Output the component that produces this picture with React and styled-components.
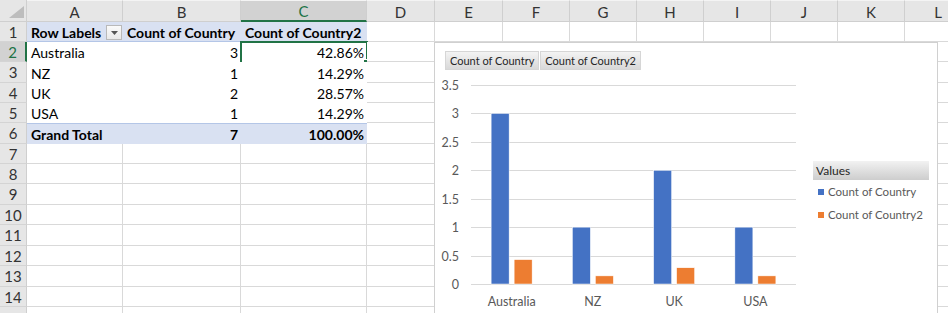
import React from 'react'
import styled, { createGlobalStyle } from 'styled-components'

const GlobalStyle = createGlobalStyle`
  html, body {
    margin: 0;
    padding: 0;
    background: #ffffff;
    overflow: hidden;
  }
`

const FONT = `Lato, "Liberation Sans", Arial, sans-serif`
const GREEN = '#217346'
const PIVOT_FILL = '#D9E1F2'
const PIVOT_LINE = '#B4C6E7'
const GRID = '#d9d9d9'

const COLS = ['A', 'B', 'C', 'D', 'E', 'F', 'G', 'H', 'I', 'J', 'K', 'L']
// row 15 only peeks in at the bottom edge, so it gets no label
const ROW_HEIGHTS = [20, 20, 21, 20, 20, 21, 20, 20, 21, 20, 21, 20, 21, 20, 20]

const pivot = {
  1: [{ text: 'Row Labels', bold: true, dropdown: true }, { text: 'Count of Country', bold: true }, { text: 'Count of Country2', bold: true }],
  2: [{ text: 'Australia' }, { text: '3', right: true }, { text: '42.86%', right: true, selected: true }],
  3: [{ text: 'NZ' }, { text: '1', right: true }, { text: '14.29%', right: true }],
  4: [{ text: 'UK' }, { text: '2', right: true }, { text: '28.57%', right: true }],
  5: [{ text: 'USA' }, { text: '1', right: true }, { text: '14.29%', right: true }],
  6: [{ text: 'Grand Total', bold: true }, { text: '7', bold: true, right: true }, { text: '100.00%', bold: true, right: true }],
}

const chartData = [
  { label: 'Australia', a: 3, b: 0.4286 },
  { label: 'NZ', a: 1, b: 0.1429 },
  { label: 'UK', a: 2, b: 0.2857 },
  { label: 'USA', a: 1, b: 0.1429 },
]

// - - SHEET - - //

const Sheet = styled.div`
  position: relative;
  width: 948px;
  height: 313px;
  overflow: hidden;
  font-family: ${FONT};
  color: #000;
`

const Grid = styled.div`
  display: grid;
  grid-template-columns: 27px 96px 118px 126px 68px 68px repeat(7, 67px);
  grid-template-rows: 22px ${ROW_HEIGHTS.map(h => h + 'px').join(' ')};
  width: max-content;
`

const Corner = styled.div`
  background: #e6e6e6;
  border-right: 1px solid #cfcfcf;
  border-bottom: 1px solid #cfcfcf;
  box-sizing: border-box;
  display: flex;
  align-items: flex-end;
  justify-content: flex-end;
  padding: 0 2px 3px 0;
`

const ColHead = styled.div`
  box-sizing: border-box;
  background: ${p => (p.$active ? '#d2d2d2' : '#e6e6e6')};
  color: ${p => (p.$active ? GREEN : '#333')};
  border-right: 1px solid #cfcfcf;
  border-bottom: ${p => (p.$active ? `2px solid ${GREEN}` : '1px solid #cfcfcf')};
  border-top: 1px solid #f4f4f4;
  display: flex;
  align-items: center;
  justify-content: center;
  font-size: 15px;
  padding-top: 1px;
`

const RowHead = styled.div`
  box-sizing: border-box;
  background: ${p => (p.$active ? '#d2d2d2' : '#e6e6e6')};
  color: ${p => (p.$active ? GREEN : '#333')};
  border-bottom: 1px solid #d4d4d4;
  border-right: ${p => (p.$active ? `2px solid ${GREEN}` : '1px solid #cfcfcf')};
  display: flex;
  align-items: center;
  justify-content: center;
  font-size: 15px;
`

const Cell = styled.div`
  position: relative;
  box-sizing: border-box;
  display: flex;
  align-items: center;
  justify-content: ${p => (p.$right ? 'flex-end' : 'flex-start')};
  padding: 1px 3px 0 4px;
  font-size: 14px;
  font-weight: ${p => (p.$bold ? 700 : 400)};
  white-space: nowrap;
  background: ${p => (p.$fill ? PIVOT_FILL : '#fff')};
  border-right: ${p => (p.$pivot ? 'none' : `1px solid ${GRID}`)};
  border-bottom: ${p => (p.$pivot ? (p.$head ? `1px solid ${PIVOT_LINE}` : 'none') : `1px solid ${GRID}`)};
  border-top: ${p => (p.$total ? `1px solid ${PIVOT_LINE}` : 'none')};
`

const Selection = styled.div`
  position: absolute;
  left: -1px;
  top: -1px;
  right: -1px;
  bottom: -2px;
  border: 2px solid ${GREEN};
  pointer-events: none;

  &::after {
    content: '';
    position: absolute;
    right: -4px;
    bottom: -4px;
    width: 5px;
    height: 5px;
    background: ${GREEN};
    border: 1px solid #fff;
  }
`

const DropButton = styled.div`
  position: absolute;
  right: 1px;
  top: 3px;
  width: 16px;
  height: 15px;
  box-sizing: border-box;
  border: 1px solid #b9b9b9;
  background: linear-gradient(#fafafa, #e9e9e9);
  display: flex;
  align-items: center;
  justify-content: center;
`

// - - CHART - - //

const Chart = styled.div`
  position: absolute;
  left: 434px;
  top: 42px;
  width: 504px;
  height: 290px;
  box-sizing: border-box;
  background: #fff;
  border: 1px solid #d0d0d0;
  font-family: ${FONT};
  color: #595959;
`

const FieldButtons = styled.div`
  display: flex;
  gap: 1px;
  margin: 8px 0 0 10px;
  height: 19px;
`

const FieldButton = styled.div`
  display: flex;
  align-items: center;
  padding: 0 4px;
  font-size: 11px;
  color: #262626;
  background: linear-gradient(#f3f3f3, #d9d9d9);
  border: 1px solid #d6d6d6;
  box-sizing: border-box;
`

const ChartBody = styled.div`
  display: flex;
`

const Legend = styled.div`
  margin: 91px 0 0 8px;
  width: 116px;
  display: flex;
  flex-direction: column;
`

const LegendTitle = styled.div`
  height: 19px;
  display: flex;
  align-items: center;
  padding-left: 3px;
  font-size: 12px;
  color: #262626;
  background: linear-gradient(#f2f2f2, #cdcdcd);
`

const LegendItem = styled.div`
  height: 23px;
  display: flex;
  align-items: center;
  gap: 4px;
  padding-left: 5px;
  font-size: 11.5px;
  color: #595959;
`

const Swatch = styled.span`
  width: 6px;
  height: 6px;
  background: ${p => p.$color};
`

const BLUE = '#4472C4'
const ORANGE = '#ED7D31'

function Plot() {
  const y0 = 214
  const unit = 56.857
  const left = 36
  const right = 361
  const cat = (right - left) / 4
  const ticks = [0, 0.5, 1, 1.5, 2, 2.5, 3, 3.5]
  return (
    <svg width="370" height="242" style={{ display: 'block' }}>
      {ticks.map(t => {
        const y = Math.round(y0 - t * unit) + 0.5
        return (
          <g key={t}>
            <line x1={left} x2={right} y1={y} y2={y} stroke="#d9d9d9" strokeWidth="1" />
            <text x="24" y={y} textAnchor="end" dominantBaseline="central" fontSize="12.5" fill="#595959" fontFamily="Lato, sans-serif">
              {t}
            </text>
          </g>
        )
      })}
      {chartData.map((d, i) => {
        const c = left + cat * (i + 0.5)
        const ha = d.a * unit
        const hb = d.b * unit
        return (
          <g key={d.label}>
            <rect x={c - 20.5} y={y0 - ha} width="18" height={ha} fill={BLUE} stroke="#fff" strokeWidth="0.5" />
            <rect x={c + 2.5} y={y0 - hb} width="18" height={hb} fill={ORANGE} stroke="#fff" strokeWidth="0.5" />
            <text x={c} y="231" textAnchor="middle" dominantBaseline="central" fontSize="12.5" fill="#595959" fontFamily="Lato, sans-serif">
              {d.label}
            </text>
          </g>
        )
      })}
    </svg>
  )
}

function PivotChart() {
  return (
    <Chart>
      <FieldButtons>
        <FieldButton>Count of Country</FieldButton>
        <FieldButton>Count of Country2</FieldButton>
      </FieldButtons>
      <ChartBody>
        <Plot />
        <Legend>
          <LegendTitle>Values</LegendTitle>
          <LegendItem><Swatch $color={BLUE} />Count of Country</LegendItem>
          <LegendItem><Swatch $color={ORANGE} />Count of Country2</LegendItem>
        </Legend>
      </ChartBody>
    </Chart>
  )
}

export default function App() {
  const rows = ROW_HEIGHTS.map((_, i) => i + 1)
  return (
    <Sheet>
      <GlobalStyle />
      <Grid>
        <Corner>
          <svg width="15" height="12">
            <polygon points="15,0 15,12 0,12" fill="#bdbdbd" />
          </svg>
        </Corner>
        {COLS.map(c => (
          <ColHead key={c} $active={c === 'C'}>{c}</ColHead>
        ))}
        {rows.map(r => (
          <React.Fragment key={r}>
            <RowHead $active={r === 2}>{r < 15 ? r : ''}</RowHead>
            {COLS.map((c, ci) => {
              const p = pivot[r] && ci < 3 ? pivot[r][ci] : null
              if (p) {
                return (
                  <Cell
                    key={c}
                    $pivot
                    $head={r === 1}
                    $total={r === 6}
                    $fill={r === 1 || r === 6}
                    $bold={p.bold}
                    $right={p.right}
                  >
                    {p.text}
                    {p.dropdown && (
                      <DropButton>
                        <svg width="7" height="4">
                          <polygon points="0,0 7,0 3.5,4" fill="#555" />
                        </svg>
                      </DropButton>
                    )}
                    {p.selected && <Selection />}
                  </Cell>
                )
              }
              return <Cell key={c} />
            })}
          </React.Fragment>
        ))}
      </Grid>
      <PivotChart />
    </Sheet>
  )
}
